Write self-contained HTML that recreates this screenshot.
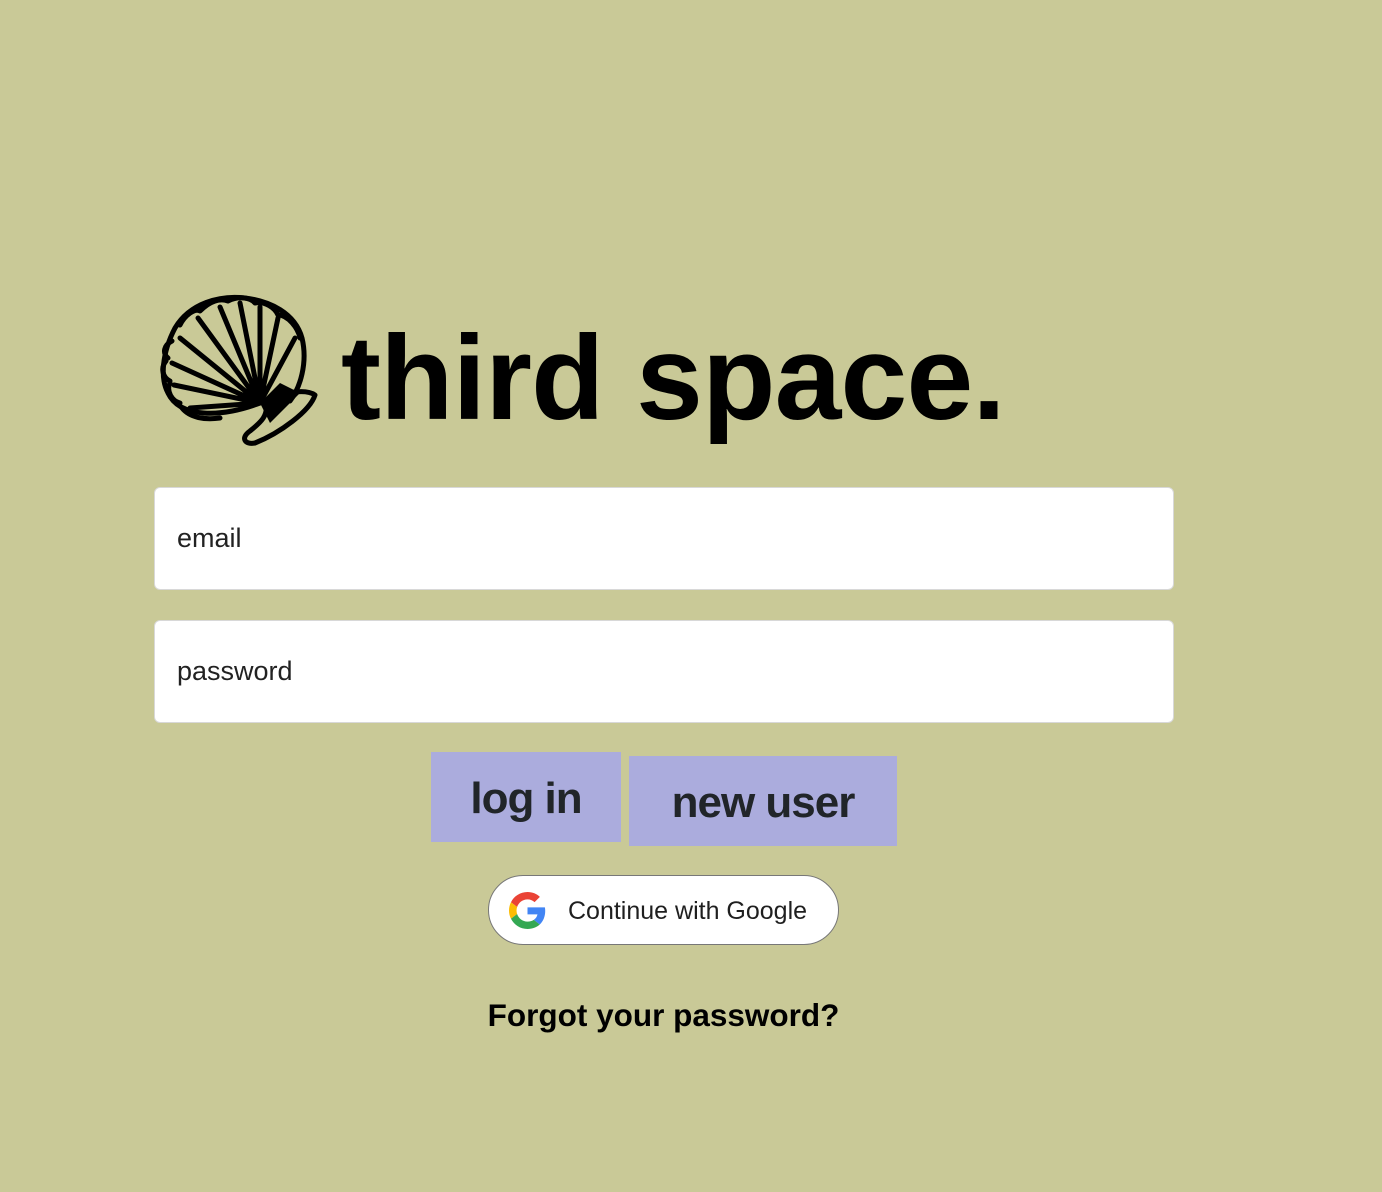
<!DOCTYPE html>
<html><head><meta charset="utf-8"><style>
html,body{margin:0;padding:0;background:#c9c997;width:1382px;height:1192px;overflow:hidden;font-family:"Liberation Sans",sans-serif;position:relative}
.abs{position:absolute}
.title{left:341px;top:303px;font-size:120px;font-weight:bold;color:#000;letter-spacing:-0.8px;line-height:150px;white-space:nowrap}
.inp{left:154px;width:1020px;height:103px;background:#fff;border:1px solid #d8d8d8;border-radius:6px;box-sizing:border-box;font-size:27px;color:#222;padding-left:22px;line-height:101px}
.btn{background:#abacdd;color:#212529;font-weight:bold;font-size:44px;text-align:center;line-height:94px;letter-spacing:-1px}
.g{left:488px;top:875px;width:351px;height:70px;box-sizing:border-box;border:1px solid #777;border-radius:35px;background:#fff}
.gt{left:568px;top:896px;font-size:25px;color:#1f1f1f;line-height:30px;white-space:nowrap}
.fg{left:0;width:1327px;top:995px;text-align:center;font-size:31.5px;font-weight:bold;color:#000;line-height:40px}
</style></head><body>
<svg class="abs" style="left:160px;top:293px" width="162" height="158" viewBox="0 0 162 158">
<g fill="none" stroke="#000" stroke-width="5" stroke-linejoin="round" stroke-linecap="round">
<path d="M100 110 C60 125 20 125 8 100 C0 85 2 60 15 35 C30 10 60 2 85 5 C110 8 135 20 142 45 C148 70 140 95 130 108"/>
<path d="M20 32 C25 22 35 15 40 18 M40 18 C50 8 60 5 68 8 M68 8 C78 3 90 4 95 10 M95 10 C105 8 115 15 118 22 M118 22 C128 22 138 35 140 45"/>
<path d="M12 48 C4 52 2 60 8 65 M6 68 C0 75 3 85 10 88 M10 90 C6 98 12 108 20 110 M22 115 C30 125 45 127 60 125"/>
<path d="M100 110 L20 45 M100 110 L12 70 M100 110 L14 92 M100 110 L30 115 M100 110 L38 25 M100 110 L60 14 M100 110 L80 10 M100 110 L100 14 M100 110 L118 25 M100 110 L135 45"/>
<path d="M105 108 C120 100 145 95 155 102 C150 118 120 140 95 150 C85 152 80 145 90 138 C100 130 110 122 105 108Z"/>
</g>
<path d="M100 110 L120 90 L140 100 L110 130Z" fill="#000"/>
</svg>
<div class="abs title">third space.</div>
<div class="abs inp" style="top:487px">email</div>
<div class="abs inp" style="top:620px">password</div>
<div class="abs btn" style="left:431px;top:752px;width:190px;height:90px">log in</div>
<div class="abs btn" style="left:629px;top:756px;width:268px;height:90px">new user</div>
<div class="abs g"></div>
<svg class="abs" style="left:509px;top:892px" width="37" height="37" viewBox="0 0 48 48">
<path fill="#EA4335" d="M24 9.5c3.54 0 6.71 1.22 9.21 3.6l6.85-6.85C35.9 2.38 30.47 0 24 0 14.62 0 6.51 5.38 2.56 13.22l7.98 6.19C12.43 13.72 17.74 9.5 24 9.5z"/>
<path fill="#4285F4" d="M46.98 24.55c0-1.57-.15-3.09-.38-4.55H24v9.02h12.94c-.58 2.96-2.26 5.48-4.78 7.18l7.73 6c4.51-4.18 7.09-10.36 7.09-17.65z"/>
<path fill="#FBBC05" d="M10.53 28.59c-.48-1.45-.76-2.99-.76-4.59s.27-3.14.76-4.59l-7.98-6.19C.92 16.46 0 20.12 0 24c0 3.88.92 7.54 2.56 10.78l7.97-6.19z"/>
<path fill="#34A853" d="M24 48c6.48 0 11.93-2.13 15.89-5.81l-7.73-6c-2.15 1.45-4.92 2.3-8.16 2.3-6.26 0-11.57-4.22-13.470-9.91l-7.98 6.19C6.51 42.62 14.62 48 24 48z"/>
</svg>
<div class="abs gt">Continue with Google</div>
<div class="abs fg">Forgot your password?</div>
</body></html>
